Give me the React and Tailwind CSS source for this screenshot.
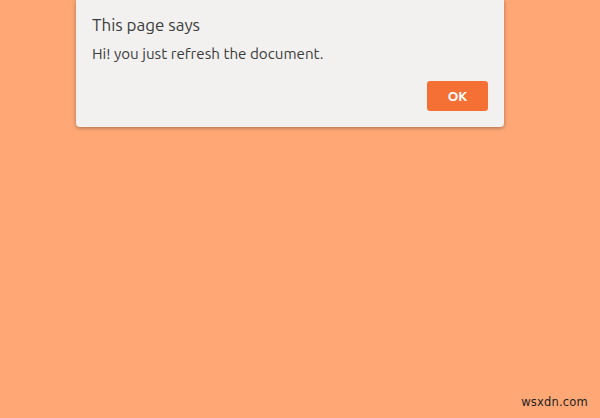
import React from 'react';

export default function App() {
  return (
    <div className="relative w-[600px] h-[418px] overflow-hidden bg-[#ffa876]" style={{ fontFamily: 'Ubuntu, "Open Sans", "Noto Sans", sans-serif' }}>
      <div className="ml-[76px] w-[428px] h-[127px] bg-[#f2f1f0] rounded-b-[4px] shadow-[0_1px_4px_rgba(0,0,0,0.35)] px-4 pt-[13px] flex flex-col">
        <h1 className="text-[17px] leading-[24px] text-[#3c3c3c]">This page says</h1>
        <p className="mt-[7px] text-[15.2px] leading-[20px] text-[#3c3c3c]">Hi! you just refresh the document.</p>
        <div className="flex justify-end mt-[17px]">
          <button className="w-[61px] h-[30px] rounded-[3px] bg-[#f57035] text-white text-[13.5px] font-bold">OK</button>
        </div>
      </div>
      <div className="absolute right-[12px] bottom-[7px] text-[11.5px] text-[#222] tracking-[0.2px]" style={{ fontFamily: '"DejaVu Sans", sans-serif' }}>wsxdn.com</div>
    </div>
  );
}
